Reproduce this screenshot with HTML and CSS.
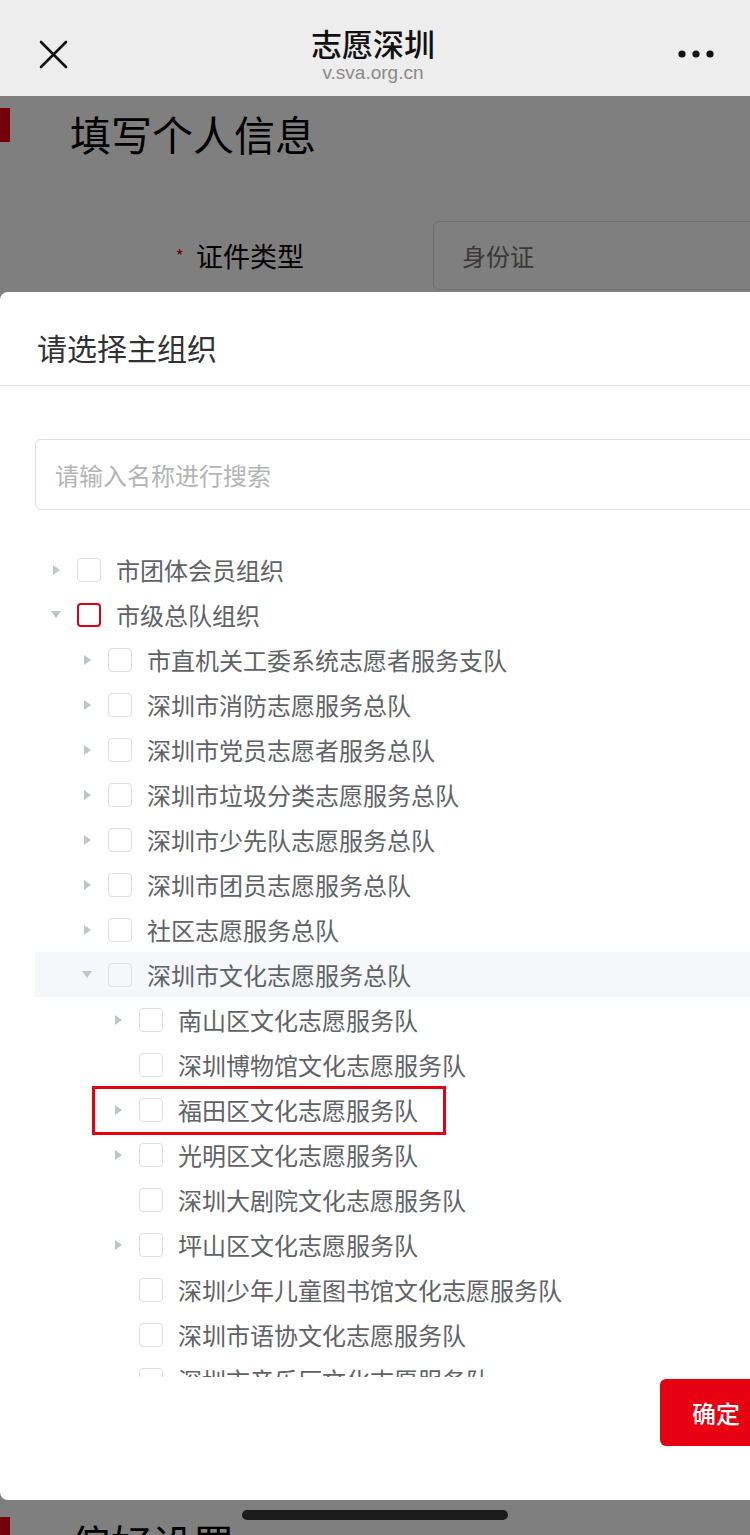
FILE: index.html
```html
<!doctype html>
<html lang="zh-CN">
<head>
  <meta charset="UTF-8">
  <meta name="viewport" content="width=device-width, initial-scale=1.0">
  <title>志愿深圳</title>
  <link rel="stylesheet" href="styles.css">
</head>
<body>
  <div class="navbar">
    <svg class="nav-close" width="29" height="29" viewBox="0 0 29 29">
      <path d="M2 2 L27 27 M27 2 L2 27" stroke="#111" stroke-width="2.6" stroke-linecap="round" fill="none"/>
    </svg>
    <div class="nav-title">
      <div class="nav-name">志愿深圳</div>
      <div class="nav-url">v.sva.org.cn</div>
    </div>
    <svg class="nav-more" width="36" height="10" viewBox="0 0 36 10">
      <circle cx="4" cy="5" r="3.6" fill="#111"/>
      <circle cx="18" cy="5" r="3.6" fill="#111"/>
      <circle cx="32" cy="5" r="3.6" fill="#111"/>
    </svg>
  </div>

  <div class="screen">
    <div class="page">
      <h2 class="section-title">填写个人信息</h2>
      <div class="form-row">
        <label class="form-label"><span class="req">*</span>证件类型</label>
        <div class="form-field">身份证</div>
      </div>
      <h2 class="section-title section-next">偏好设置</h2>
    </div>

    <div class="mask"></div>

    <div class="dialog">
      <div class="dialog-header">请选择主组织</div>
      <div class="dialog-body">
        <input type="text" class="search" placeholder="请输入名称进行搜索">

        <div class="tree">
          <div class="node lv0"><span class="arrow"></span><span class="check"></span><span class="label">市团体会员组织</span></div>
          <div class="node lv0"><span class="arrow open"></span><span class="check red"></span><span class="label">市级总队组织</span></div>
          <div class="node lv1"><span class="arrow"></span><span class="check"></span><span class="label">市直机关工委系统志愿者服务支队</span></div>
          <div class="node lv1"><span class="arrow"></span><span class="check"></span><span class="label">深圳市消防志愿服务总队</span></div>
          <div class="node lv1"><span class="arrow"></span><span class="check"></span><span class="label">深圳市党员志愿者服务总队</span></div>
          <div class="node lv1"><span class="arrow"></span><span class="check"></span><span class="label">深圳市垃圾分类志愿服务总队</span></div>
          <div class="node lv1"><span class="arrow"></span><span class="check"></span><span class="label">深圳市少先队志愿服务总队</span></div>
          <div class="node lv1"><span class="arrow"></span><span class="check"></span><span class="label">深圳市团员志愿服务总队</span></div>
          <div class="node lv1"><span class="arrow"></span><span class="check"></span><span class="label">社区志愿服务总队</span></div>
          <div class="node lv1 current"><span class="arrow open"></span><span class="check"></span><span class="label">深圳市文化志愿服务总队</span></div>
          <div class="node lv2"><span class="arrow"></span><span class="check"></span><span class="label">南山区文化志愿服务队</span></div>
          <div class="node lv2"><span class="arrow leaf"></span><span class="check"></span><span class="label">深圳博物馆文化志愿服务队</span></div>
          <div class="node lv2"><span class="arrow"></span><span class="check"></span><span class="label">福田区文化志愿服务队</span><span class="mark"></span></div>
          <div class="node lv2"><span class="arrow"></span><span class="check"></span><span class="label">光明区文化志愿服务队</span></div>
          <div class="node lv2"><span class="arrow leaf"></span><span class="check"></span><span class="label">深圳大剧院文化志愿服务队</span></div>
          <div class="node lv2"><span class="arrow"></span><span class="check"></span><span class="label">坪山区文化志愿服务队</span></div>
          <div class="node lv2"><span class="arrow leaf"></span><span class="check"></span><span class="label">深圳少年儿童图书馆文化志愿服务队</span></div>
          <div class="node lv2"><span class="arrow leaf"></span><span class="check"></span><span class="label">深圳市语协文化志愿服务队</span></div>
          <div class="node lv2"><span class="arrow leaf"></span><span class="check"></span><span class="label">深圳市音乐厅文化志愿服务队</span></div>
        </div>

        <button class="btn-ok">确定</button>
      </div>
    </div>

    <div class="home-bar"></div>
  </div>
</body>
</html>
```

FILE: styles.css
```css
* {
  box-sizing: border-box;
}

body {
  margin: 0;
  width: 750px;
  height: 1535px;
  overflow: hidden;
  background-color: #fff;
  color: #303133;
  font-family: "Noto Sans CJK SC", "Noto Sans", sans-serif;
}

/* top bar */
.navbar {
  height: 96px;
  padding: 14px 36px 0 39px;
  display: flex;
  align-items: center;
  justify-content: space-between;
  background-color: #ededed;
}

.nav-close {
  margin-top: -2px;
}

.nav-more {
  margin-top: -2px;
}

.nav-title {
  text-align: center;
}

.nav-name {
  font-size: 31px;
  font-weight: 500;
  line-height: 36px;
  color: #111;
}

.nav-url {
  font-family: "Liberation Sans", Arial, sans-serif;
  font-size: 19px;
  line-height: 24px;
  color: #8a8a8a;
}

/* page behind the dialog */
.screen {
  position: relative;
  height: 1439px;
  overflow: hidden;
}

.section-title {
  display: flex;
  margin: 12px 0 0;
  height: 50px;
  font-size: 41px;
  font-weight: 400;
  line-height: 50px;
  color: #000;
}

.section-title::before {
  content: "";
  width: 10px;
  height: 34px;
  margin-right: 60px;
  background-color: #e60012;
  flex-shrink: 0;
}

.section-next {
  margin-top: 1227px;
}

.form-row {
  display: flex;
  align-items: center;
  margin-top: 63px;
}

.form-label {
  width: 304px;
  flex-shrink: 0;
  text-align: right;
  font-size: 27px;
  color: #000;
}

.req {
  color: #e60012;
  font-size: 18px;
  margin-right: 12px;
  vertical-align: 4px;
}

.form-field {
  width: 340px;
  height: 69px;
  flex-shrink: 0;
  margin-left: 129px;
  padding-left: 28px;
  display: flex;
  align-items: center;
  border: 1px solid #dcdfe6;
  border-radius: 6px;
  font-size: 24px;
  color: #707070;
}

.mask {
  position: absolute;
  inset: 0;
  background-color: rgba(0, 0, 0, 0.5);
}

/* dialog */
.dialog {
  position: absolute;
  top: 196px;
  left: 0;
  width: 762px;
  height: 1208px;
  background-color: #fff;
  border-radius: 8px;
}

.dialog-header {
  height: 94px;
  padding: 16px 0 0 37px;
  display: flex;
  align-items: center;
  font-size: 30px;
  color: #303133;
  border-bottom: 1px solid #e4e4e4;
}

.dialog-body {
  padding: 53px 0 0 35px;
}

.search {
  display: block;
  width: 740px;
  height: 71px;
  padding: 0 0 0 19px;
  border: 1px solid #dcdfe6;
  border-radius: 6px;
  font-family: inherit;
  font-size: 24px;
  outline: none;
}

.search::placeholder {
  color: #b4b4b4;
}

/* tree */
.tree {
  margin-top: 37px;
  height: 830px;
  overflow: hidden;
}

.node {
  position: relative;
  height: 45px;
  display: flex;
  align-items: center;
}

.lv0 { padding-left: 9px; }
.lv1 { padding-left: 40px; }
.lv2 { padding-left: 71px; }

.node.current {
  background-color: #f5f7fa;
}

.arrow {
  width: 24px;
  height: 24px;
  display: flex;
  align-items: center;
  justify-content: center;
  flex-shrink: 0;
}

.arrow::before {
  content: "";
  border-left: 7px solid #c0c4cc;
  border-top: 5px solid transparent;
  border-bottom: 5px solid transparent;
}

.arrow.open::before {
  border-top: 7px solid #c0c4cc;
  border-left: 5px solid transparent;
  border-right: 5px solid transparent;
  border-bottom: 0;
}

.arrow.leaf::before {
  display: none;
}

.check {
  width: 24px;
  height: 24px;
  margin-left: 9px;
  border: 1px solid #dcdfe6;
  border-radius: 4px;
  flex-shrink: 0;
}

.check.red {
  border: 2px solid #d9001b;
}

.label {
  margin-left: 15px;
  font-size: 24px;
  color: #606266;
  white-space: nowrap;
}

/* annotation box drawn over the row */
.mark {
  position: absolute;
  left: 57px;
  top: -1px;
  width: 354px;
  height: 49px;
  border: 3px solid #e60012;
}

.btn-ok {
  display: block;
  margin: 2px 0 0 625px;
  width: 110px;
  height: 67px;
  padding: 0 0 0 32px;
  text-align: left;
  border: none;
  border-radius: 6px;
  background-color: #e60012;
  color: #fff;
  font-family: inherit;
  font-size: 24px;
  font-weight: 500;
}

.home-bar {
  position: absolute;
  left: 242px;
  top: 1414px;
  width: 266px;
  height: 10px;
  border-radius: 5px;
  background-color: #1c1c1c;
}
```
